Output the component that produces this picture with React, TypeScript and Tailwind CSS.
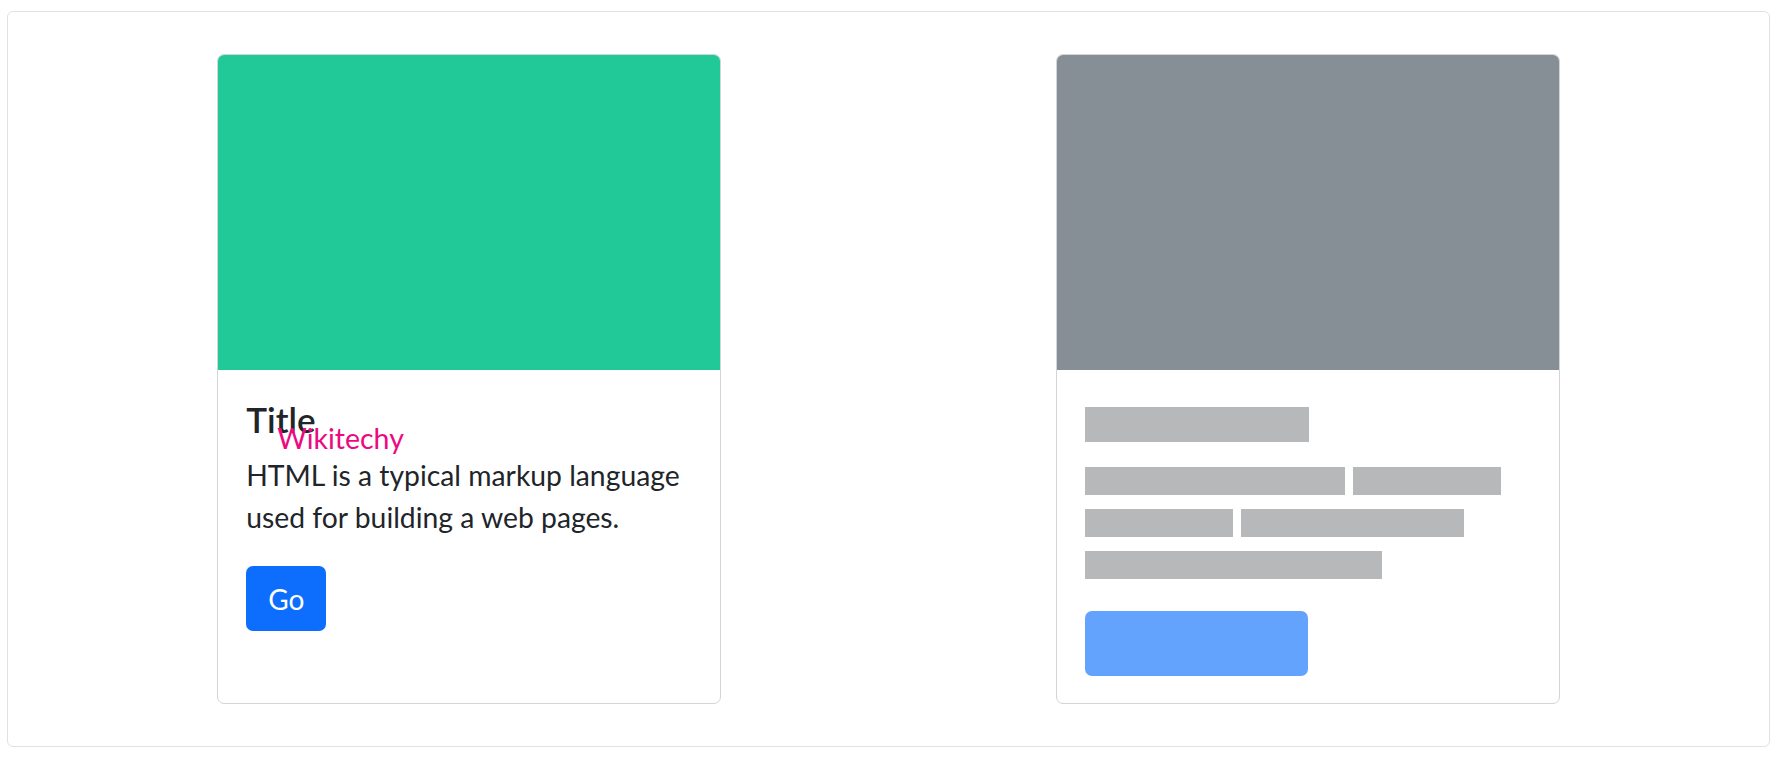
import React from "react";

const font = { fontFamily: 'Lato, "Noto Sans", sans-serif' };

export default function App() {
  return (
    <div className="bg-white w-[1778px] h-[757px] pt-[11px] pl-[7px] text-[#212529]" style={font}>
      <div className="w-[1763px] h-[736px] border border-[#dee2e6] rounded-[6px] flex justify-around px-[42px] py-[42px]">
        {/* Card 1 */}
        <div className="relative w-[504px] border border-[#d3d4d5] rounded-[7px] overflow-hidden flex flex-col bg-white">
          <div className="h-[315px] bg-[#20c997] shrink-0" />
          <div className="p-[28px] flex flex-col items-start">
            <h5 className="text-[35px] leading-[42px] font-semibold mb-[14px]">Title</h5>
            <p className="text-[28.3px] leading-[42px] mb-[28px]">
              <span className="whitespace-nowrap">HTML is a typical markup language</span>
              <br />
              <span className="whitespace-nowrap">used for building a web pages.</span>
            </p>
            <button className="w-[80px] h-[65px] rounded-[7px] bg-[#0d6efd] text-white text-[28px] leading-none flex items-center justify-center">
              Go
            </button>
          </div>
          <span className="absolute left-[59px] top-[369px] text-[28.5px] leading-none text-[#ec0a80] whitespace-nowrap">
            Wikitechy
          </span>
        </div>

        {/* Card 2 (placeholder) */}
        <div className="w-[504px] border border-[#d3d4d5] rounded-[7px] overflow-hidden flex flex-col bg-white">
          <div className="h-[315px] bg-[#868e96] shrink-0" />
          <div className="p-[28px] flex flex-col">
            <div className="h-[42px] mb-[14px] pt-[9px]">
              <div className="w-[224px] h-[35px] bg-[#b7b8b9]" />
            </div>
            <div className="flex flex-col mb-[31px]">
              <div className="h-[42px] pt-[13px] flex gap-[8px]">
                <div className="w-[260px] h-[28px] bg-[#b7b8b9]" />
                <div className="w-[148px] h-[28px] bg-[#b7b8b9]" />
              </div>
              <div className="h-[42px] pt-[13px] flex gap-[8px]">
                <div className="w-[148px] h-[28px] bg-[#b7b8b9]" />
                <div className="w-[223px] h-[28px] bg-[#b7b8b9]" />
              </div>
              <div className="h-[42px] pt-[13px] flex gap-[8px]">
                <div className="w-[297px] h-[28px] bg-[#b7b8b9]" />
              </div>
            </div>
            <div className="w-[223px] h-[65px] rounded-[7px] bg-[#63a2fd]" />
          </div>
        </div>
      </div>
    </div>
  );
}
